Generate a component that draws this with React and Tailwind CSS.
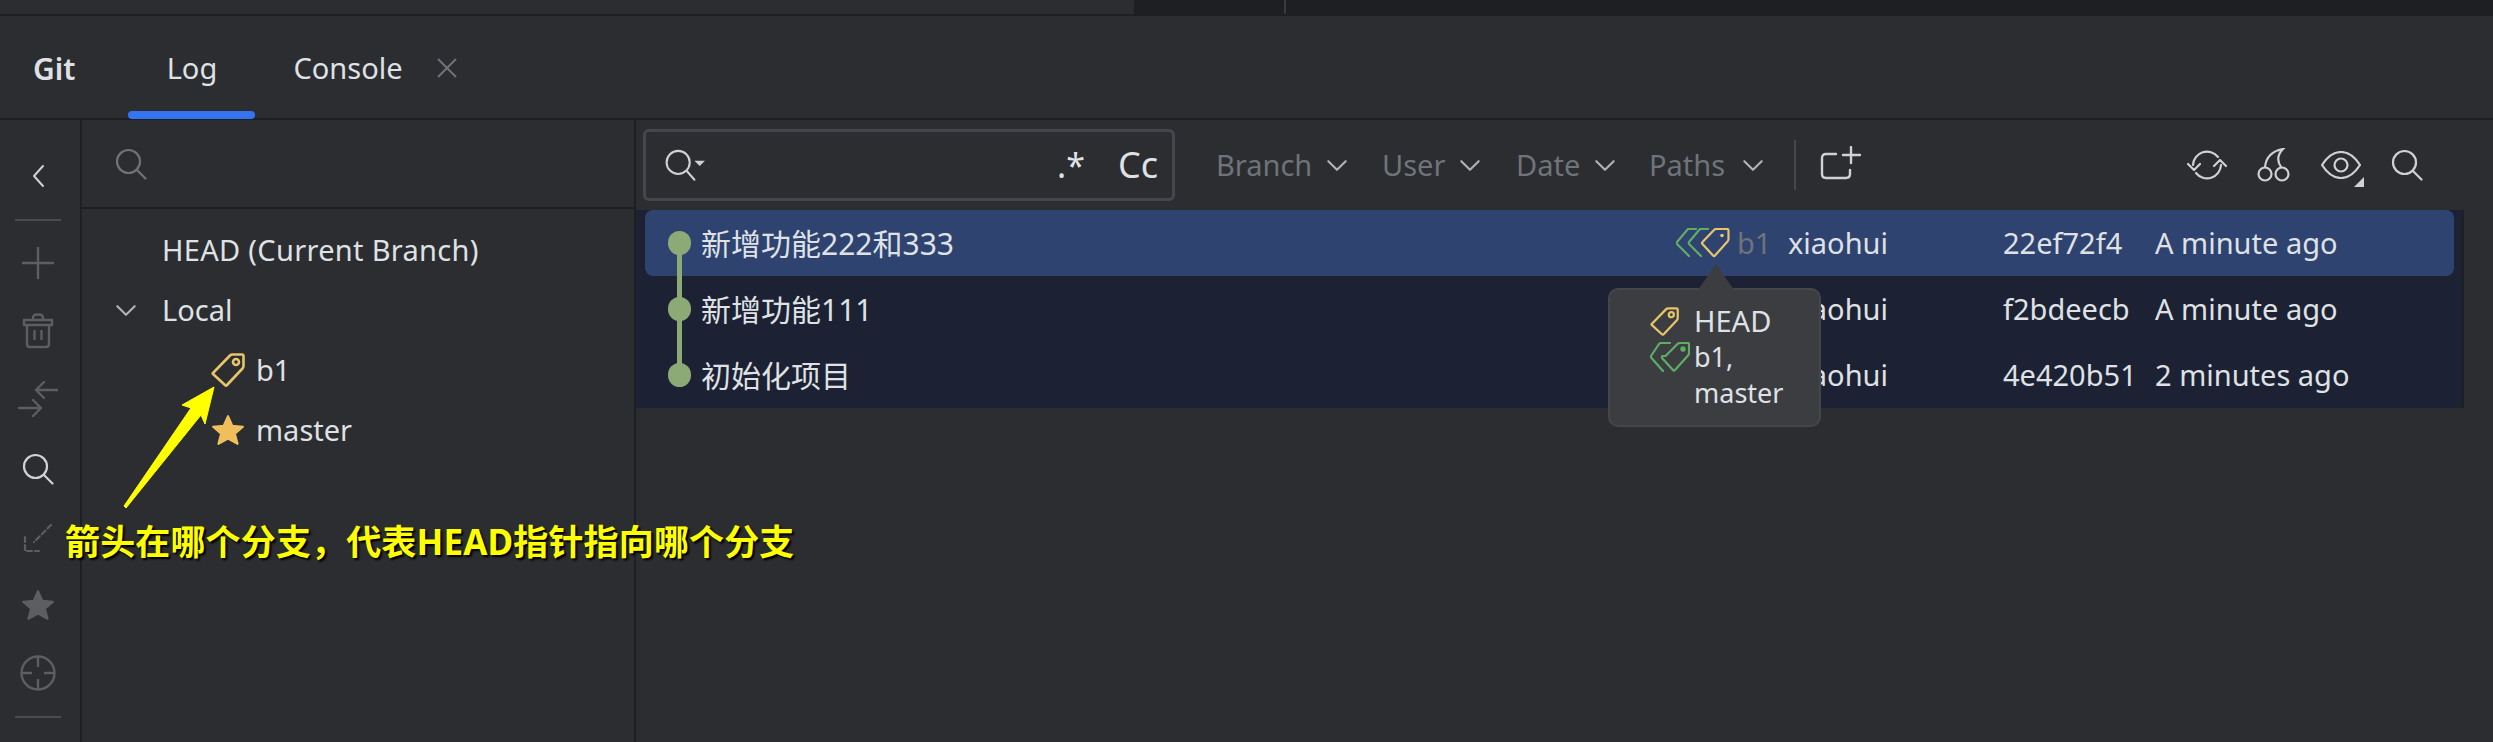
const Tag = ({ className = "", color = "#e8c46a", size = 30 }) => (
  <svg width={size} height={size} viewBox="0 0 34 34" fill="none" stroke={color} strokeWidth="2.6" strokeLinejoin="round" className={className}>
    <path d="M2 20 L19 2.5 Q20 1.5 21.5 1.5 H31 Q32.5 1.5 32.5 3 V13 Q32.5 14.5 31.5 15.5 L16 32 Q15 33 14 32 L2 21 Q1.5 20.5 2 20 Z" />
    <circle cx="25" cy="9" r="3" />
  </svg>
);

const DoubleTag = ({ color = "#5fad65", className = "" }) => (
  <svg width="40" height="30" viewBox="0 0 40 30" fill="none" stroke={color} strokeWidth="2.2" strokeLinejoin="round" strokeLinecap="round" className={className}>
    <path d="M20 1 H11 Q10 1 9 2 L1 14 Q0.5 15 1.5 16 L13 29" />
    <path d="M15.5 14 L28 1.5 Q29 1 30 1 H38 Q39 1 39 2 V11 Q39 12.5 38 13.5 L25 28 Q24 29 23 28 L12 16 Q11.5 15 12.5 14 Z" />
    <circle cx="33" cy="7" r="1.6" fill={color} />
  </svg>
);

const TripleTag = () => (
  <svg width="54" height="30" viewBox="0 0 54 30" fill="none" strokeWidth="2.2" strokeLinejoin="round" strokeLinecap="round">
    <path stroke="#5fad65" d="M20 1 H12 L1 14 Q0.5 15 1 16 L13 28" />
    <path stroke="#5fad65" d="M32 1 H24 L13 14 Q12.5 15 13 16 L25 28" />
    <path stroke="#e8c46a" d="M26.5 14 L38 2 Q39 1 40 1 H51 Q52.5 1 52.5 2.5 V11 Q52.5 12.5 51.5 13.5 L39 27.5 Q38 28.5 37 27.5 L26.5 16 Q25.5 15 26.5 14 Z" />
    <circle cx="46" cy="7.5" r="1.8" fill="#e8c46a" stroke="none" />
  </svg>
);

const Star = ({ color, size = 32 }) => (
  <svg width={size} height={size} viewBox="0 0 32 32" fill={color} stroke={color} strokeWidth="2" strokeLinejoin="round">
    <path d="M16 3 L20 12 L30 13 L22.5 19.5 L25 29 L16 24 L7 29 L9.5 19.5 L2 13 L12 12 Z" />
  </svg>
);

const Search = ({ color = "#cfd1d4", size = 32, strokeWidth = 2.2 }) => (
  <svg width={size} height={size} viewBox="0 0 32 32" fill="none" stroke={color} strokeWidth={strokeWidth} strokeLinecap="round">
    <circle cx="13.5" cy="13.5" r="11.5" />
    <path d="M22 22 L30.5 30.5" />
  </svg>
);

const Chevron = ({ color = "#aeb1b5" }) => (
  <svg width="22" height="13" viewBox="0 0 20 12" fill="none" stroke={color} strokeWidth="2" strokeLinecap="round" strokeLinejoin="round">
    <path d="M2 2 L10 10 L18 2" />
  </svg>
);

const Slot = ({ h, children, className = "" }) => (
  <div className={`flex w-full items-center justify-center ${className}`} style={{ height: h }}>{children}</div>
);

const LeftToolbar = () => {
  const dim = "#5c5e61";
  return (
    <div className="flex w-[82px] shrink-0 flex-col items-center border-r-2 border-[#1e1f22]">
      <Slot h={99} className="pt-[13px] pr-[4px]">
        <svg width="14" height="24" viewBox="0 0 14 24" fill="none" stroke="#cfd1d4" strokeWidth="2" strokeLinecap="round" strokeLinejoin="round"><path d="M12 2 L3 12 L12 22" /></svg>
      </Slot>
      <div className="h-[2px] w-[46px] -translate-x-[2px] bg-[#4a4c50]" />
      <Slot h={84} className="pr-[4px]">
        <svg width="34" height="34" viewBox="0 0 34 34" stroke={dim} strokeWidth="2.4"><path d="M17 1 V33 M1 17 H33" /></svg>
      </Slot>
      <Slot h={52} className="pr-[4px]">
        <svg width="32" height="36" viewBox="0 0 32 36" fill="none" stroke={dim} strokeWidth="2.4" strokeLinejoin="round"><path d="M2 7 H30 V12 H2 Z M11 7 V5 Q11 1.5 15 1.5 H17 Q21 1.5 21 5 V7 M5 12 V31 Q5 34 8 34 H24 Q27 34 27 31 V12 M12.5 17 V27 M19.5 17 V27" /></svg>
      </Slot>
      <Slot h={84} className="pr-[4px]">
        <svg width="40" height="36" viewBox="0 0 40 36" fill="none" stroke={dim} strokeWidth="2.4" strokeLinecap="round" strokeLinejoin="round"><path d="M40 9 H18 M26 1 L18 9 L26 17 M1 27 H23 M15 19 L23 27 L15 35" /></svg>
      </Slot>
      <Slot h={55} className="pr-[4px]">
        <Search size={32} />
      </Slot>
      <Slot h={84} className="pr-[4px]">
        <svg width="30" height="30" viewBox="0 0 30 30" fill="none" stroke={dim} strokeWidth="2.2" strokeLinecap="round" strokeDasharray="5 3"><path d="M28 2 L11 19 M2 14 V28 H16" /></svg>
      </Slot>
      <Slot h={50} className="pr-[4px]">
        <Star color={dim} size={34} />
      </Slot>
      <Slot h={86} className="pr-[4px]">
        <svg width="38" height="38" viewBox="0 0 38 38" fill="none" stroke={dim} strokeWidth="2.4"><circle cx="19" cy="19" r="16.5" /><path d="M19 2 V13 M19 25 V36 M2 19 H13 M25 19 H36" /></svg>
      </Slot>
      <div className="h-[2px] w-[46px] -translate-x-[2px] bg-[#4a4c50]" />
    </div>
  );
};

const TreeRow = ({ children }) => <div className="flex h-[60px] items-center">{children}</div>;

const SidePanel = () => (
  <div className="flex w-[554px] shrink-0 flex-col border-r-2 border-[#1e1f22]">
    <div className="flex h-[89px] items-center border-b-2 border-[#1e1f22] pl-[33px]">
      <Search color="#6f7377" size={32} />
    </div>
    <div className="flex flex-col pt-[11px] text-[29px] text-[#dfe1e5]">
      <TreeRow><span className="pl-[80px] tracking-[0.3px]">HEAD (Current Branch)</span></TreeRow>
      <TreeRow>
        <span className="ml-[33px] w-[47px]"><Chevron /></span>
        <span>Local</span>
      </TreeRow>
      <TreeRow>
        <span className="ml-[128px] mr-[10px] flex w-[36px] justify-center"><Tag size={34} /></span>
        <span>b1</span>
      </TreeRow>
      <TreeRow>
        <span className="ml-[128px] mr-[10px] flex w-[36px] justify-center"><Star color="#f0bf5c" size={34} /></span>
        <span>master</span>
      </TreeRow>
    </div>
  </div>
);

const Filter = ({ label, w, gap = "gap-[14px]" }) => (
  <div className={`flex items-center ${gap} text-[#6f737a]`} style={{ width: w }}>
    <span>{label}</span>
    <Chevron />
  </div>
);

const Toolbar = () => (
  <div className="flex h-[90px] items-center pl-[7px] pr-[70px] text-[29px]">
    <div className="flex h-[72px] w-[532px] items-center rounded-[6px] border-[3px] border-[#45474d] pl-[18px] pr-[14px] text-[#dfe1e5]">
      <svg width="42" height="34" viewBox="0 0 40 32" fill="none" stroke="#cfd1d4" strokeWidth="2" strokeLinecap="round">
        <circle cx="13.5" cy="13.5" r="11" />
        <path d="M21.5 21.5 L29 30" />
        <path d="M29 12 H39 L34 17 Z" fill="#cfd1d4" stroke="none" />
      </svg>
      <span className="ml-auto text-[34px]">.*</span>
      <span className="ml-[33px] text-[36px]">Cc</span>
    </div>
    <div className="ml-[41px] flex items-center">
      <Filter label="Branch" w={166} />
      <Filter label="User" w={134} />
      <Filter label="Date" w={133} />
      <Filter label="Paths" w={145} gap="gap-[17px]" />
    </div>
    <div className="h-[50px] w-[2px] bg-[#45474d]" />
    <svg width="42" height="38" viewBox="0 0 42 38" fill="none" stroke="#cfd1d4" strokeWidth="2.4" strokeLinecap="round" strokeLinejoin="round" className="ml-[24px]">
      <path d="M16 8 H6 Q2 8 2 12 V28 Q2 32 6 32 H26 Q30 32 30 28 V24" />
      <path d="M31 1 V17 M23 9 H40" />
    </svg>
    <div className="ml-auto flex items-center gap-[30px]">
      <svg width="40" height="32" viewBox="0 0 40 32" fill="none" stroke="#cfd1d4" strokeWidth="2.2" strokeLinecap="round" strokeLinejoin="round">
        <path d="M34 16 A14 14 0 0 1 9 24 M6 16 A14 14 0 0 1 31 8" />
        <path d="M1 15 L7 21 L13 15 M27 17 L33 11 L39 17" />
      </svg>
      <svg width="34" height="34" viewBox="0 0 34 34" fill="none" stroke="#cfd1d4" strokeWidth="2.2" strokeLinecap="round">
        <circle cx="8" cy="26" r="6.5" />
        <circle cx="25" cy="26" r="6.5" />
        <path d="M8 19 C9 10 15 3 26 1 C20 7 20 13 24 19" />
      </svg>
      <div className="relative">
        <svg width="40" height="28" viewBox="0 0 40 28" fill="none" stroke="#cfd1d4" strokeWidth="2.2">
          <path d="M1 14 C8 3 15 1 20 1 C25 1 32 3 39 14 C32 25 25 27 20 27 C15 27 8 25 1 14 Z" />
          <circle cx="20" cy="14" r="6.5" />
        </svg>
        <svg width="10" height="10" viewBox="0 0 10 10" className="absolute right-[-3px] bottom-[-8px]"><path d="M10 0 V10 H0 Z" fill="#cfd1d4" /></svg>
      </div>
      <Search size={32} />
    </div>
  </div>
);

const commits = [
  { m: "新增功能222和333", a: "xiaohui", h: "22ef72f4", d: "A minute ago", sel: true },
  { m: "新增功能111", a: "xiaohui", h: "f2bdeecb", d: "A minute ago" },
  { m: "初始化项目", a: "xiaohui", h: "4e420b51", d: "2 minutes ago" },
];

const CommitRow = ({ c, i }) => (
  <div className={`relative flex h-[66px] items-center pl-[9px] text-[29px] text-[#dfe1e5] ${c.sel ? "bg-[#1c2233]" : ""}`}>
    <div className={`flex h-full w-[1809px] items-center ${c.sel ? "rounded-[8px] bg-[#2e4370]" : ""}`}>
      <div className="relative ml-[23px] flex h-full w-[33px] items-center">
        {i < 2 && <div className="absolute top-[33px] left-[9px] h-[66px] w-[5px] bg-[#8caa76]" />}
        <div className="relative h-[24px] w-[23px] rounded-full bg-[#8caa76]" />
      </div>
      <span className="w-[975px] shrink-0 text-[30px]">{c.m}</span>
      <div className="flex w-[112px] shrink-0 items-center gap-[7px]">
        {c.sel && <TripleTag />}
        {c.sel && <span className="text-[#6f737a]">b1</span>}
      </div>
      <span className="w-[215px] shrink-0">{c.a}</span>
      <span className="w-[152px] shrink-0">{c.h}</span>
      <span>{c.d}</span>
    </div>
  </div>
);

const Tooltip = () => (
  <div className="absolute top-[288px] left-[1608px] h-[139px] w-[213px] rounded-[10px] border-2 border-[#45464a] bg-[#3c3d41] pt-[13px] pl-[40px] text-[27px] leading-[36px] text-[#dfe1e5]">
    <svg width="40" height="28" viewBox="0 0 40 28" className="absolute top-[-27px] left-[86px]"><path d="M20 1 L38 27 H2 Z" fill="#3c3d41" /></svg>
    <div className="flex items-center">
      <span className="w-[44px]"><Tag size={29} /></span>
      <span className="text-[29px]">HEAD</span>
    </div>
    <div className="flex items-center">
      <span className="w-[44px]"><DoubleTag /></span>
      <span>b1,</span>
    </div>
    <div className="pl-[44px]">master</div>
  </div>
);

const Annotation = () => (
  <>
    <svg width="100" height="130" viewBox="0 0 100 130" className="absolute top-[384px] left-[120px]">
      <path d="M94 3 L85 40 L81 31 L6 124 L4 122 L71 24 L62 21 Z" fill="#ffff00" stroke="#ffff00" strokeWidth="1" strokeLinejoin="round" />
    </svg>
    <div className="absolute top-[518px] left-[65px] text-[35px] leading-[48px] font-bold tracking-[0.15px] whitespace-nowrap text-[#ffff00] [text-shadow:2px_2px_2px_#000]">
      箭头在哪个分支，代表HEAD指针指向哪个分支
    </div>
  </>
);

export default function App() {
  return (
    <div className="relative flex h-[742px] w-[2493px] flex-col overflow-hidden bg-[#2b2d30] font-['Noto_Sans','Noto_Sans_CJK_SC',sans-serif]">
      <div className="flex h-[16px] shrink-0">
        <div className="h-full w-[1134px] border-b-2 border-[#1e1f22]" />
        <div className="h-full flex-1 bg-[#1e1f22] pl-[150px]">
          <div className="h-[14px] w-[2px] bg-[#3a3b3f]" />
        </div>
      </div>

      <div className="flex h-[104px] shrink-0 items-center border-b-2 border-[#1e1f22] pt-[2px] text-[29px] text-[#dfe1e5]">
        <span className="ml-[33px] text-[30px] font-semibold">Git</span>
        <div className="relative ml-[53px] flex h-full w-[127px] items-center justify-center">
          <span>Log</span>
          <div className="absolute bottom-[-1px] left-0 h-[8px] w-[127px] rounded-[4px] bg-[#3574f0]" />
        </div>
        <span className="ml-[38px]">Console</span>
        <svg width="20" height="20" viewBox="0 0 20 20" stroke="#6f737a" strokeWidth="2" className="ml-[34px]"><path d="M1 1 L19 19 M19 1 L1 19" /></svg>
      </div>

      <div className="flex min-h-0 flex-1">
        <LeftToolbar />
        <SidePanel />
        <div className="flex min-w-0 flex-1 flex-col">
          <Toolbar />
          <div className="w-[1828px] border-r-2 border-[#1e1f22]">
            <div className="bg-[#1c2233]">
              {commits.map((c, i) => <CommitRow key={c.h} c={c} i={i} />)}
            </div>
          </div>
        </div>
      </div>

      <Tooltip />
      <Annotation />
    </div>
  );
}
